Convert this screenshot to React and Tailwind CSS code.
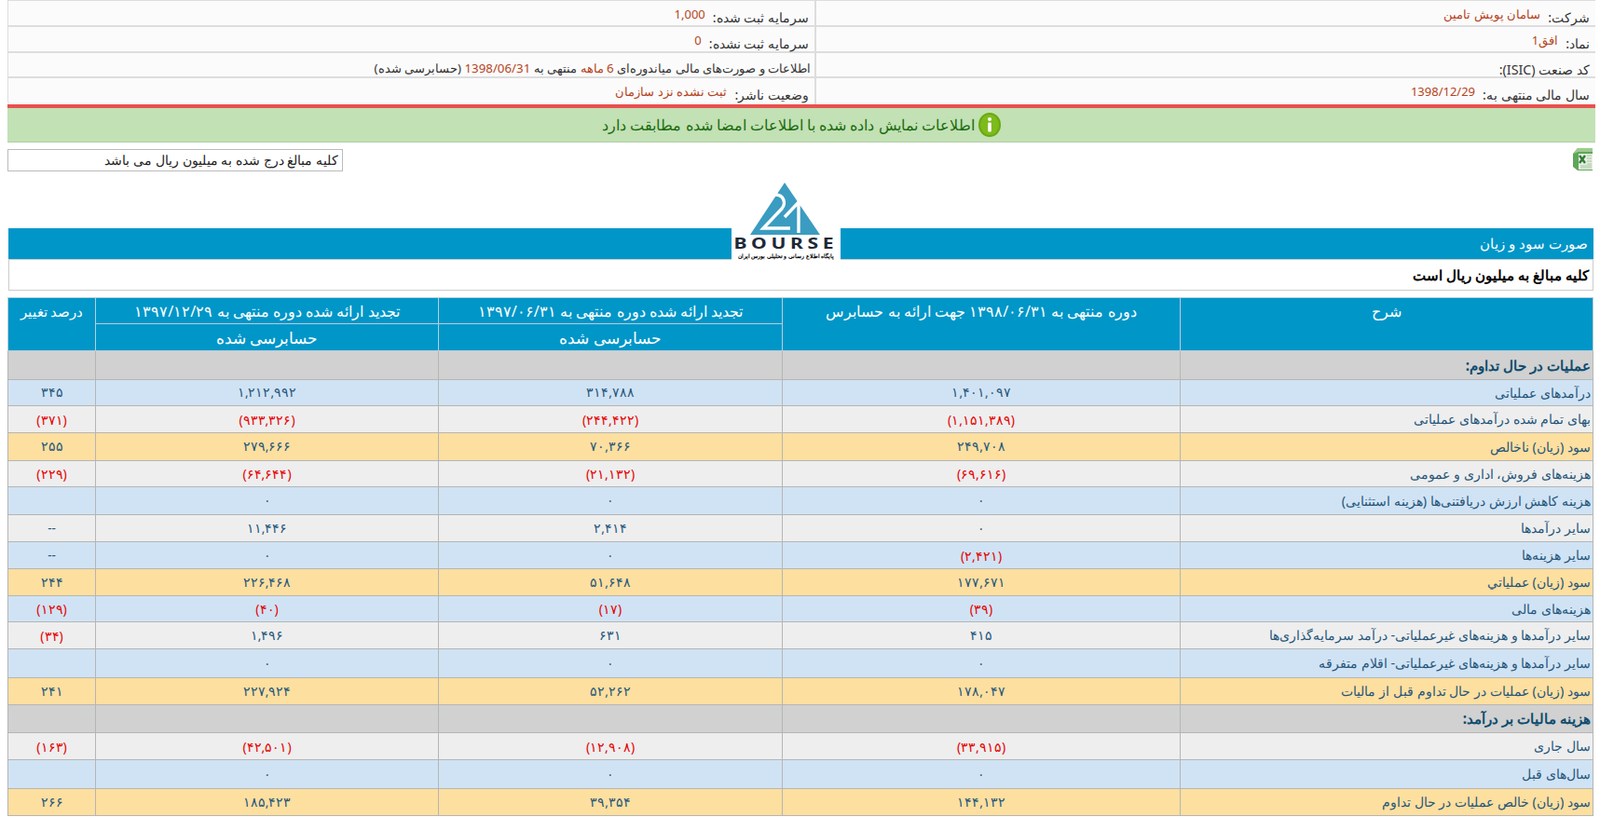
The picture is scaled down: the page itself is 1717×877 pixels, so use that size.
import React from 'react';

const rows = [
  {type: 'section', h: 'h-[31px]', name: 'عملیات در حال تداوم:', vals: ['', '', '', '']},
  {type: 'blue', h: 'h-[28px]', name: 'درآمدهای عملیاتی', vals: ['۱,۴۰۱,۰۹۷', '۳۱۴,۷۸۸', '۱,۲۱۲,۹۹۲', '۳۴۵']},
  {type: 'gray', h: 'h-[29px]', name: 'بهای تمام شده درآمدهای عملیاتی', vals: ['(۱,۱۵۱,۳۸۹)', '(۲۴۴,۴۲۲)', '(۹۳۳,۳۲۶)', '(۳۷۱)']},
  {type: 'total', h: 'h-[30px]', name: 'سود (زیان) ناخالص', vals: ['۲۴۹,۷۰۸', '۷۰,۳۶۶', '۲۷۹,۶۶۶', '۲۵۵']},
  {type: 'gray', h: 'h-[28px]', name: 'هزینه‌های فروش، اداری و عمومی', vals: ['(۶۹,۶۱۶)', '(۲۱,۱۳۲)', '(۶۴,۶۴۴)', '(۲۲۹)']},
  {type: 'blue', h: 'h-[30px]', name: 'هزینه کاهش ارزش دریافتنی‌ها (هزینه استثنایی)', vals: ['۰', '۰', '۰', '']},
  {type: 'gray', h: 'h-[29px]', name: 'سایر درآمدها', vals: ['۰', '۲,۴۱۴', '۱۱,۴۴۶', '--']},
  {type: 'blue', h: 'h-[29px]', name: 'سایر هزینه‌ها', vals: ['(۲,۴۲۱)', '۰', '۰', '--']},
  {type: 'total', h: 'h-[29px]', name: 'سود (زیان) عملیاتي', vals: ['۱۷۷,۶۷۱', '۵۱,۶۴۸', '۲۲۶,۴۶۸', '۲۴۴']},
  {type: 'blue', h: 'h-[28px]', name: 'هزینه‌های مالی', vals: ['(۳۹)', '(۱۷)', '(۴۰)', '(۱۲۹)']},
  {type: 'gray', h: 'h-[29px]', name: 'سایر درآمدها و هزینه‌های غیرعملیاتی- درآمد سرمایه‌گذاری‌ها', vals: ['۴۱۵', '۶۳۱', '۱,۴۹۶', '(۳۴)']},
  {type: 'blue', h: 'h-[31px]', name: 'سایر درآمدها و هزینه‌های غیرعملیاتی- اقلام متفرقه', vals: ['۰', '۰', '۰', '']},
  {type: 'total', h: 'h-[29px]', name: 'سود (زیان) عملیات در حال تداوم قبل از مالیات', vals: ['۱۷۸,۰۴۷', '۵۲,۲۶۲', '۲۲۷,۹۲۴', '۲۴۱']},
  {type: 'section', h: 'h-[30px]', name: 'هزینه مالیات بر درآمد:', vals: ['', '', '', '']},
  {type: 'gray', h: 'h-[29px]', name: 'سال جاری', vals: ['(۳۳,۹۱۵)', '(۱۲,۹۰۸)', '(۴۲,۵۰۱)', '(۱۶۳)']},
  {type: 'blue', h: 'h-[31px]', name: 'سال‌های قبل', vals: ['۰', '۰', '۰', '']},
  {type: 'total', h: 'h-[29px]', name: 'سود (زیان) خالص عملیات در حال تداوم', vals: ['۱۴۴,۱۳۲', '۳۹,۳۵۴', '۱۸۵,۴۲۳', '۲۶۶']},
];

const rowBg = {
  section: 'bg-[#d1d1d1]',
  blue: 'bg-[#d0e3f4]',
  gray: 'bg-[#eeeeee]',
  total: 'bg-[#fddf9f]',
};

const InfoCell = ({label, value}) => (
  <div className="flex items-start gap-2 pt-2.5 pr-1.5">
    <span className="text-[14.25px] leading-4 text-[#333]">{label}</span>
    {value && <span className="text-[13px] leading-4 -mt-1 text-[#b5441c]">{value}</span>}
  </div>
);

const InfoIcon = () => (
  <svg width="24" height="26" viewBox="0 0 24 26">
    <ellipse cx="12" cy="13" rx="12" ry="13" fill="#6aa80f"/>
    <ellipse cx="12" cy="13" rx="10" ry="11" fill="#7dbb1c"/>
    <circle cx="12" cy="7" r="2" fill="#fff"/>
    <rect x="10.2" y="10.5" width="3.6" height="10" rx="1" fill="#fff"/>
  </svg>
);

const ExcelIcon = () => (
  <svg width="24" height="26" viewBox="0 0 24 26">
    <path d="M1 7 L6 1 H22 V25 H6 L1 21 Z" fill="#5fa65a"/>
    <path d="M1 7 L6 1 H22 V5 H7 Z" fill="#9ccc8f"/>
    <rect x="7" y="7" width="15" height="17" fill="#e6efe2"/>
    <path d="M8 9 L14 17 M14 9 L8 17" stroke="#2f7a37" strokeWidth="2.4"/>
    <path d="M16 9 H21 M16 12 H21 M16 15 H21 M16 18 H21 M9 20 H21 M9 22 H21" stroke="#a8c4a2" strokeWidth="1"/>
  </svg>
);

const Logo = () => (
  <div className="absolute top-[-55px] left-[776px] w-[117px] h-[95px] bg-white flex flex-col items-center" dir="ltr">
    <svg width="117" height="64" viewBox="0 0 117 64" className="shrink-0">
      <path d="M57 6 L95 62 H20 Z" fill="#3a9cc0"/>
      <path d="M47 19 C56 19 59 28 54 34 L34 55 H63" fill="none" stroke="#fff" strokeWidth="3.4"/>
      <path d="M57 43 L72 27 V60" fill="none" stroke="#fff" strokeWidth="3.4"/>
    </svg>
    <span className="text-[16px] leading-[14px] font-bold tracking-[3.5px] scale-x-[1.32] text-[#1c2a36] font-['Liberation_Sans',sans-serif]">BOURSE</span>
    <span className="mt-0.5 text-[6px] leading-[10px] font-bold text-black whitespace-nowrap" dir="rtl">پایگاه اطلاع رسانی و تحلیلی بورس ایران</span>
  </div>
);

const headCell = 'border border-[#b7cfdb] bg-[#0096c8] text-white text-[16px] font-normal align-top pt-0.5';
const headCellLong = 'border border-[#b7cfdb] bg-[#0096c8] text-white text-[16.25px] font-normal align-top pt-0.5';
const headCellSub = 'border border-[#b7cfdb] bg-[#0096c8] text-white text-[17px] font-normal align-top pt-0.5';
const headCellSmall = 'border border-[#b7cfdb] bg-[#0096c8] text-white text-[14.5px] font-normal align-top pt-1';

export default function App() {
  return (
    <div dir="rtl" className="h-[877px] overflow-hidden bg-white font-['DejaVu_Sans',sans-serif] pl-2 pr-[5px]">
      <div className="grid grid-cols-[836px_1fr] bg-[#fbfbfb] border-t border-l border-[#dddddd] rounded-bl">
        <div className="h-[28px] border-b-2 border-[#dddddd]"><InfoCell label="شرکت:" value="سامان پویش تامین"/></div>
        <div className="h-[28px] border-b-2 border-r-2 border-[#dddddd]"><InfoCell label="سرمایه ثبت شده:" value="1,000"/></div>
        <div className="h-[28px] border-b-2 border-[#dddddd]"><InfoCell label="نماد:" value="افق1"/></div>
        <div className="h-[28px] border-b-2 border-r-2 border-[#dddddd]"><InfoCell label="سرمایه ثبت نشده:" value="0"/></div>
        <div className="h-[27px] border-b-2 border-[#dddddd]"><InfoCell label="کد صنعت (ISIC):"/></div>
        <div className="h-[27px] border-b-2 border-r-2 border-[#dddddd]">
          <div className="pt-2 pr-1 text-[13.3px] leading-4 text-[#333]">
            اطلاعات و صورت‌های مالی میاندوره‌ای <span className="text-[#b5441c]">6 ماهه</span> منتهی به <span className="text-[#b5441c]">1398/06/31</span> (حسابرسی شده)
          </div>
        </div>
        <div className="h-[28px]"><InfoCell label="سال مالی منتهی به:" value="1398/12/29"/></div>
        <div className="h-[28px] border-r-2 border-[#dddddd]"><InfoCell label="وضعیت ناشر:" value="ثبت نشده نزد سازمان"/></div>
      </div>

      <div className="h-[4px] bg-[#e8514f]"></div>
      <div className="h-[37px] bg-[#c2e1b4] border-b border-[#b5cfa9] flex items-center justify-center gap-1 text-[16px] text-[#1c6b10]">
        <InfoIcon/>
        <span>اطلاعات نمایش داده شده با اطلاعات امضا شده مطابقت دارد</span>
      </div>

      <div className="flex justify-between items-start mt-[5px]">
        <div className="mr-px"><ExcelIcon/></div>
        <div className="w-[360px] h-[24px] bg-white border border-[#bbbbbb] pr-1 text-[14.2px] leading-[22px] text-[#222] mt-0.5">
          کلیه مبالغ درج شده به میلیون ریال می باشد
        </div>
      </div>

      <div className="relative mt-[61px] mr-[2px] ml-px">
        <Logo/>
        <div className="h-[33px] bg-[#0096c8] text-white text-[15px] leading-[33px] pr-1.5">صورت سود و زیان</div>
        <div className="h-[34px] bg-white border border-[#cccccc] text-black text-[15px] font-bold leading-[32px] pr-1">کلیه مبالغ به میلیون ریال است</div>
      </div>

      <table className="mt-[7px] mr-[2px] w-[1701px] table-fixed border-collapse">
        <colgroup>
          <col className="w-[443px]"/>
          <col className="w-[427px]"/>
          <col className="w-[369px]"/>
          <col className="w-[368px]"/>
          <col className="w-[94px]"/>
        </colgroup>
        <thead>
          <tr className="h-[28px]">
            <th rowSpan={2} className={headCell}>شرح</th>
            <th rowSpan={2} className={headCell}>دوره منتهی به ۱۳۹۸/۰۶/۳۱ جهت ارائه به حسابرس</th>
            <th className={headCellLong}>تجدید ارائه شده دوره منتهی به ۱۳۹۷/۰۶/۳۱</th>
            <th className={headCellLong}>تجدید ارائه شده دوره منتهی به ۱۳۹۷/۱۲/۲۹</th>
            <th rowSpan={2} className={headCellSmall}>درصد تغییر</th>
          </tr>
          <tr className="h-[29px]">
            <th className={headCellSub}>حسابرسی شده</th>
            <th className={headCellSub}>حسابرسی شده</th>
          </tr>
        </thead>
        <tbody>
          {rows.map((row, i) => (
            <tr key={i} className={row.h + ' ' + rowBg[row.type]}>
              <td className={row.type === 'section'
                ? 'border border-[#b5b5b5] pr-0.5 text-[15.3px] font-bold text-[#0f4c6e]'
                : 'border border-[#b5b5b5] pr-0.5 text-[14.4px] text-[#25567b]'}>
                {row.name}
              </td>
              {row.vals.map((v, j) => (
                <td key={j} className={v.startsWith('(')
                  ? 'border border-[#b5b5b5] text-center text-[14px] text-[#e60000]'
                  : 'border border-[#b5b5b5] text-center text-[13.5px] text-[#25567b]'}>
                  {v}
                </td>
              ))}
            </tr>
          ))}
        </tbody>
      </table>
    </div>
  );
}
